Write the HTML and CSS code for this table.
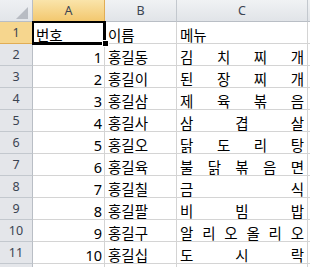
FILE: index.html
```html
<!DOCTYPE html>
<html lang="ko">
<head>
<meta charset="utf-8">
<link rel="stylesheet" href="styles.css">
</head>
<body>
<div class="sheet">
  <div class="grid">
    <div class="corner"><span class="tri"></span></div>
    <div class="colhead sel">A</div>
    <div class="colhead">B</div>
    <div class="colhead">C</div>
    <div class="colhead last"></div>

    <div class="rowhead sel">1</div>
    <div class="cell">번호</div>
    <div class="cell">이름</div>
    <div class="cell">메뉴</div>
    <div class="cell last"></div>

    <div class="rowhead">2</div>
    <div class="cell num">1</div>
    <div class="cell">홍길동</div>
    <div class="cell dist"><span>김</span><span>치</span><span>찌</span><span>개</span></div>
    <div class="cell last"></div>

    <div class="rowhead">3</div>
    <div class="cell num">2</div>
    <div class="cell">홍길이</div>
    <div class="cell dist"><span>된</span><span>장</span><span>찌</span><span>개</span></div>
    <div class="cell last"></div>

    <div class="rowhead">4</div>
    <div class="cell num">3</div>
    <div class="cell">홍길삼</div>
    <div class="cell dist"><span>제</span><span>육</span><span>볶</span><span>음</span></div>
    <div class="cell last"></div>

    <div class="rowhead">5</div>
    <div class="cell num">4</div>
    <div class="cell">홍길사</div>
    <div class="cell dist"><span>삼</span><span>겹</span><span>살</span></div>
    <div class="cell last"></div>

    <div class="rowhead">6</div>
    <div class="cell num">5</div>
    <div class="cell">홍길오</div>
    <div class="cell dist"><span>닭</span><span>도</span><span>리</span><span>탕</span></div>
    <div class="cell last"></div>

    <div class="rowhead">7</div>
    <div class="cell num">6</div>
    <div class="cell">홍길육</div>
    <div class="cell dist"><span>불</span><span>닭</span><span>볶</span><span>음</span><span>면</span></div>
    <div class="cell last"></div>

    <div class="rowhead">8</div>
    <div class="cell num">7</div>
    <div class="cell">홍길칠</div>
    <div class="cell dist"><span>금</span><span>식</span></div>
    <div class="cell last"></div>

    <div class="rowhead">9</div>
    <div class="cell num">8</div>
    <div class="cell">홍길팔</div>
    <div class="cell dist"><span>비</span><span>빔</span><span>밥</span></div>
    <div class="cell last"></div>

    <div class="rowhead">10</div>
    <div class="cell num">9</div>
    <div class="cell">홍길구</div>
    <div class="cell dist"><span>알</span><span>리</span><span>오</span><span>올</span><span>리</span><span>오</span></div>
    <div class="cell last"></div>

    <div class="rowhead">11</div>
    <div class="cell num">10</div>
    <div class="cell">홍길십</div>
    <div class="cell dist"><span>도</span><span>시</span><span>락</span></div>
    <div class="cell last"></div>

    <div class="rowhead"></div>
    <div class="cell"></div>
    <div class="cell"></div>
    <div class="cell"></div>
    <div class="cell last"></div>
  </div>
  <div class="selection"></div>
  <div class="handle"></div>
</div>
</body>
</html>
```

FILE: styles.css
```css
html, body {
  margin: 0;
  padding: 0;
  background: #ffffff;
  overflow: hidden;
}

.sheet {
  position: relative;
  width: 310px;
  height: 267px;
  overflow: hidden;
}

.grid {
  display: grid;
  grid-template-columns: 33px 72px 72px 131px 40px;
  grid-auto-rows: 22px;
  font-family: "Noto Sans", "Noto Sans CJK KR", sans-serif;
}

.grid > div {
  box-sizing: border-box;
  border-right: 1px solid #d4d4d4;
  border-bottom: 1px solid #d4d4d4;
  overflow: hidden;
  white-space: nowrap;
}

.corner {
  position: relative;
  background: linear-gradient(#eef0f3, #e2e5e9);
  border-right-color: #b9bec5 !important;
  border-bottom-color: #b9bec5 !important;
}

.tri {
  position: absolute;
  right: 4px;
  bottom: 2px;
  width: 0;
  height: 0;
  border-left: 12px solid transparent;
  border-bottom: 12px solid #b8bcc3;
}

.colhead {
  display: flex;
  align-items: center;
  justify-content: center;
  font-size: 12.5px;
  color: #3b4452;
  background: linear-gradient(#f0f2f4, #e1e4e8);
  border-right-color: #c3c8ce !important;
  border-bottom-color: #b9bec5 !important;
}

.colhead.sel {
  background: linear-gradient(#fae4aa, #f3c86f);
  border-right-color: #e1ad55 !important;
  border-bottom-color: #d89c3c !important;
}

.rowhead {
  display: flex;
  align-items: center;
  justify-content: center;
  font-size: 12.5px;
  color: #3b4452;
  background: #e4e6ea;
  border-right-color: #b9bec5 !important;
  border-bottom-color: #c3c8ce !important;
}

.rowhead.sel {
  background: #f6d68e;
  border-right-color: #d89c3c !important;
  border-bottom-color: #e1ad55 !important;
}

.cell {
  display: flex;
  align-items: flex-end;
  padding: 0 3px;
  font-size: 14.5px;
  line-height: 15px;
  color: #000000;
}

.cell.num {
  justify-content: flex-end;
  padding-right: 2px;
}

.cell.dist {
  justify-content: space-between;
}

.selection {
  position: absolute;
  left: 32px;
  top: 21px;
  width: 74px;
  height: 24px;
  box-sizing: border-box;
  border-left: 2px solid #000;
  border-top: 2px solid #000;
  border-right: 3px solid #000;
  border-bottom: 3px solid #000;
}

.handle {
  position: absolute;
  left: 102px;
  top: 40px;
  width: 5px;
  height: 5px;
  background: #000;
  border: 1px solid #fff;
}
```
